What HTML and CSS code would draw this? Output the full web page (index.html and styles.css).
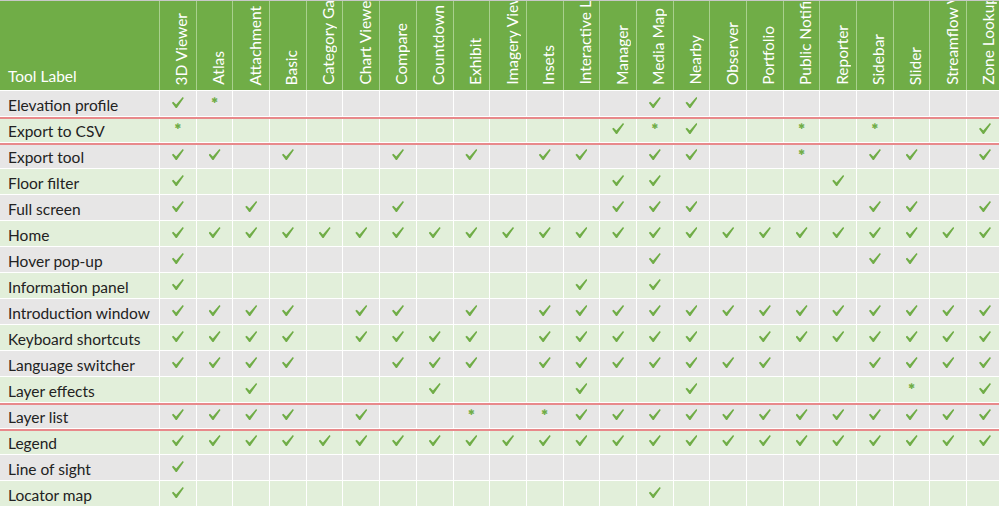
FILE: index.html
```html
<!DOCTYPE html>
<html>
<head>
<meta charset="utf-8">
<link rel="stylesheet" href="styles.css">
</head>
<body>
<div class="sheet">
  <div class="hdr">
    <div class="first">Tool Label</div>
    <div><span class="v">3D Viewer</span></div>
    <div><span class="v">Atlas</span></div>
    <div><span class="v">Attachment</span></div>
    <div><span class="v">Basic</span></div>
    <div><span class="v">Category Gallery</span></div>
    <div><span class="v">Chart Viewer</span></div>
    <div><span class="v">Compare</span></div>
    <div><span class="v">Countdown</span></div>
    <div><span class="v">Exhibit</span></div>
    <div><span class="v">Imagery Viewer</span></div>
    <div><span class="v">Insets</span></div>
    <div><span class="v">Interactive Legend</span></div>
    <div><span class="v">Manager</span></div>
    <div><span class="v">Media Map</span></div>
    <div><span class="v">Nearby</span></div>
    <div><span class="v">Observer</span></div>
    <div><span class="v">Portfolio</span></div>
    <div><span class="v">Public Notification</span></div>
    <div><span class="v">Reporter</span></div>
    <div><span class="v">Sidebar</span></div>
    <div><span class="v">Slider</span></div>
    <div><span class="v">Streamflow Viewer</span></div>
    <div><span class="v">Zone Lookup</span></div>
  </div>

  <div class="row g"><span class="lbl">Elevation profile</span><i class="k"></i><i class="a"></i><i></i><i></i><i></i><i></i><i></i><i></i><i></i><i></i><i></i><i></i><i></i><i class="k"></i><i class="k"></i><i></i><i></i><i></i><i></i><i></i><i></i><i></i><i></i></div>

  <div class="row l red"><span class="lbl">Export to CSV</span><i class="a"></i><i></i><i></i><i></i><i></i><i></i><i></i><i></i><i></i><i></i><i></i><i></i><i class="k"></i><i class="a"></i><i class="k"></i><i></i><i></i><i class="a"></i><i></i><i class="a"></i><i></i><i></i><i class="k"></i></div>

  <div class="row g red"><span class="lbl">Export tool</span><i class="k"></i><i class="k"></i><i></i><i class="k"></i><i></i><i></i><i class="k"></i><i></i><i class="k"></i><i></i><i class="k"></i><i class="k"></i><i></i><i class="k"></i><i class="k"></i><i></i><i></i><i class="a"></i><i></i><i class="k"></i><i class="k"></i><i></i><i class="k"></i></div>

  <div class="row l"><span class="lbl">Floor filter</span><i class="k"></i><i></i><i></i><i></i><i></i><i></i><i></i><i></i><i></i><i></i><i></i><i></i><i class="k"></i><i class="k"></i><i></i><i></i><i></i><i></i><i class="k"></i><i></i><i></i><i></i><i></i></div>

  <div class="row g"><span class="lbl">Full screen</span><i class="k"></i><i></i><i class="k"></i><i></i><i></i><i></i><i class="k"></i><i></i><i></i><i></i><i></i><i></i><i class="k"></i><i class="k"></i><i class="k"></i><i></i><i></i><i></i><i></i><i class="k"></i><i class="k"></i><i></i><i class="k"></i></div>

  <div class="row l"><span class="lbl">Home</span><i class="k"></i><i class="k"></i><i class="k"></i><i class="k"></i><i class="k"></i><i class="k"></i><i class="k"></i><i class="k"></i><i class="k"></i><i class="k"></i><i class="k"></i><i class="k"></i><i class="k"></i><i class="k"></i><i class="k"></i><i class="k"></i><i class="k"></i><i class="k"></i><i class="k"></i><i class="k"></i><i class="k"></i><i class="k"></i><i class="k"></i></div>

  <div class="row g"><span class="lbl">Hover pop-up</span><i class="k"></i><i></i><i></i><i></i><i></i><i></i><i></i><i></i><i></i><i></i><i></i><i></i><i></i><i class="k"></i><i></i><i></i><i></i><i></i><i></i><i class="k"></i><i class="k"></i><i></i><i></i></div>

  <div class="row l"><span class="lbl">Information panel</span><i class="k"></i><i></i><i></i><i></i><i></i><i></i><i></i><i></i><i></i><i></i><i></i><i class="k"></i><i></i><i class="k"></i><i></i><i></i><i></i><i></i><i></i><i></i><i></i><i></i><i></i></div>

  <div class="row g"><span class="lbl">Introduction window</span><i class="k"></i><i class="k"></i><i class="k"></i><i class="k"></i><i></i><i class="k"></i><i class="k"></i><i></i><i class="k"></i><i></i><i class="k"></i><i class="k"></i><i class="k"></i><i class="k"></i><i class="k"></i><i class="k"></i><i class="k"></i><i class="k"></i><i class="k"></i><i class="k"></i><i class="k"></i><i class="k"></i><i class="k"></i></div>

  <div class="row l"><span class="lbl">Keyboard shortcuts</span><i class="k"></i><i class="k"></i><i class="k"></i><i class="k"></i><i></i><i class="k"></i><i class="k"></i><i class="k"></i><i class="k"></i><i></i><i class="k"></i><i class="k"></i><i class="k"></i><i class="k"></i><i class="k"></i><i></i><i class="k"></i><i class="k"></i><i class="k"></i><i class="k"></i><i class="k"></i><i class="k"></i><i class="k"></i></div>

  <div class="row g"><span class="lbl">Language switcher</span><i class="k"></i><i class="k"></i><i class="k"></i><i class="k"></i><i></i><i></i><i class="k"></i><i class="k"></i><i class="k"></i><i></i><i class="k"></i><i class="k"></i><i class="k"></i><i class="k"></i><i class="k"></i><i class="k"></i><i class="k"></i><i></i><i></i><i class="k"></i><i class="k"></i><i class="k"></i><i class="k"></i></div>

  <div class="row l"><span class="lbl">Layer effects</span><i></i><i></i><i class="k"></i><i></i><i></i><i></i><i></i><i class="k"></i><i></i><i></i><i></i><i class="k"></i><i></i><i></i><i class="k"></i><i></i><i></i><i></i><i></i><i></i><i class="a"></i><i></i><i class="k"></i></div>

  <div class="row g red"><span class="lbl">Layer list</span><i class="k"></i><i class="k"></i><i class="k"></i><i class="k"></i><i></i><i class="k"></i><i></i><i></i><i class="a"></i><i></i><i class="a"></i><i class="k"></i><i class="k"></i><i class="k"></i><i class="k"></i><i class="k"></i><i class="k"></i><i class="k"></i><i class="k"></i><i class="k"></i><i class="k"></i><i class="k"></i><i class="k"></i></div>

  <div class="row l red"><span class="lbl">Legend</span><i class="k"></i><i class="k"></i><i class="k"></i><i class="k"></i><i class="k"></i><i class="k"></i><i class="k"></i><i class="k"></i><i class="k"></i><i class="k"></i><i class="k"></i><i class="k"></i><i class="k"></i><i class="k"></i><i class="k"></i><i class="k"></i><i class="k"></i><i class="k"></i><i class="k"></i><i class="k"></i><i class="k"></i><i class="k"></i><i class="k"></i></div>

  <div class="row g"><span class="lbl">Line of sight</span><i class="k"></i><i></i><i></i><i></i><i></i><i></i><i></i><i></i><i></i><i></i><i></i><i></i><i></i><i></i><i></i><i></i><i></i><i></i><i></i><i></i><i></i><i></i><i></i></div>

  <div class="row l"><span class="lbl">Locator map</span><i class="k"></i><i></i><i></i><i></i><i></i><i></i><i></i><i></i><i></i><i></i><i></i><i></i><i></i><i class="k"></i><i></i><i></i><i></i><i></i><i></i><i></i><i></i><i></i><i></i></div>
</div>
</body>
</html>
```

FILE: styles.css
```css
html, body {
  margin: 0;
  padding: 0;
  background: #ffffff;
}

body {
  font-family: Lato, "Liberation Sans", sans-serif;
  overflow: hidden;
}

.sheet {
  width: 999px;
  height: 506px;
  overflow: hidden;
  border-top: 1px solid #c8c8c8;
  box-sizing: border-box;
  background: #ffffff;
}

.hdr {
  display: grid;
  grid-template-columns: 159px repeat(23, 35.7px);
  column-gap: 1px;
  height: 89px;
  background: #a9d08e;
}

.hdr > div {
  background: #70ad47;
  overflow: hidden;
  display: flex;
  justify-content: center;
  align-items: flex-end;
  padding: 0 0 5px 7px;
  box-sizing: border-box;
  color: #ffffff;
  font-size: 15.5px;
  line-height: 18px;
}

.hdr > .first {
  justify-content: flex-start;
  padding: 0 0 5px 8px;
}

.v {
  writing-mode: vertical-rl;
  transform: rotate(180deg);
  white-space: nowrap;
  flex: none;
}

.row {
  position: relative;
  display: grid;
  grid-template-columns: 159px repeat(23, 35.7px);
  column-gap: 1px;
  height: 25px;
  margin-top: 1px;
  background: #ffffff;
}

.row.red::before {
  content: "";
  position: absolute;
  left: 0;
  right: 0;
  top: 0;
  height: 2px;
  background: #e8898b;
}

.row.g > * { background: #e7e6e6; }
.row.l > * { background: #e2efda; }

.lbl {
  padding: 5px 0 0 8px;
  font-size: 15.5px;
  line-height: 18px;
  color: #222222;
  white-space: nowrap;
  overflow: hidden;
}

.row i {
  display: block;
  font-style: normal;
}

.k::before {
  content: "";
  display: block;
  width: 12px;
  height: 11px;
  margin: 6px auto 0;
  background: #70ad47;
  clip-path: polygon(0 5.8px, 1.5px 4.8px, 4.3px 7.4px, 10.9px 0, 12px 0.9px, 5px 11px, 3.9px 11px);
}

.a::before {
  content: "\2731";
  display: block;
  text-align: center;
  font-family: "DejaVu Sans", sans-serif;
  font-size: 8px;
  line-height: 8px;
  padding-top: 6px;
  color: #70ad47;
}
```
